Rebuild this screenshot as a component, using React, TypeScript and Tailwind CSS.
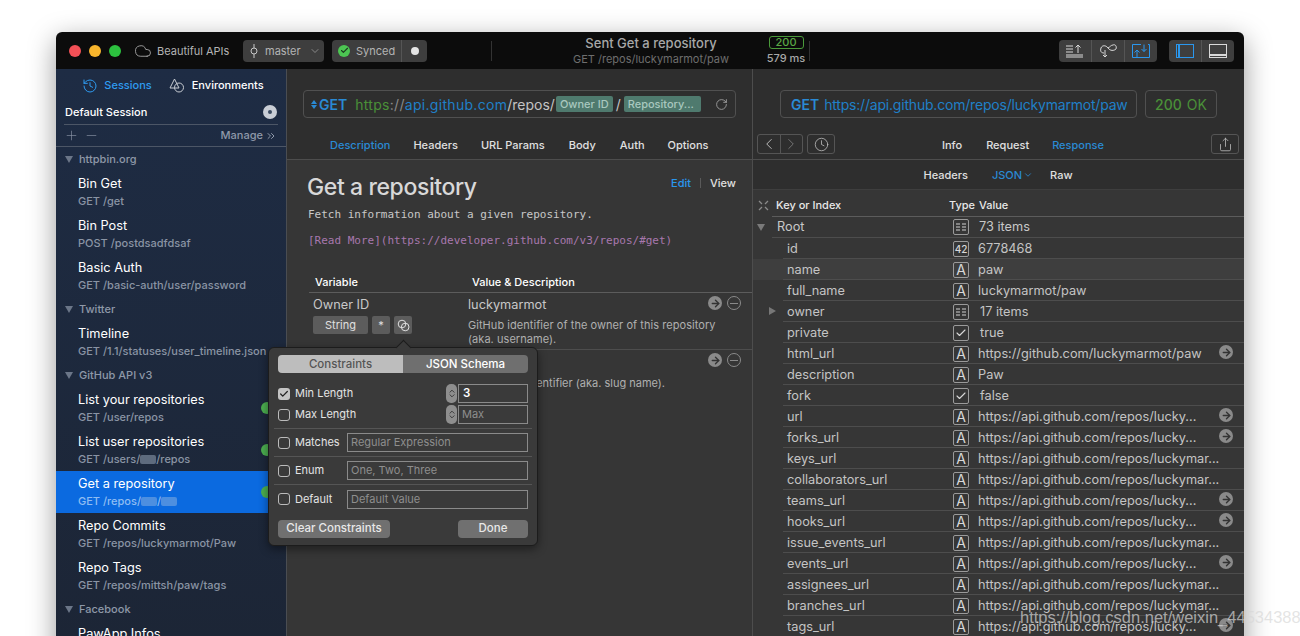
import { ArrowRight, Check, ChevronDown, ChevronLeft, ChevronRight, ChevronsRight, ChevronsUpDown, Clock, Cloud, History, Minus, Plus, RotateCw, Share } from "lucide-react";

const groups = [
  {
    name: "httpbin.org",
    items: [
      { title: "Bin Get", path: "GET /get" },
      { title: "Bin Post", path: "POST /postdsadfdsaf" },
      { title: "Basic Auth", path: "GET /basic-auth/user/password" },
    ],
  },
  { name: "Twitter", items: [{ title: "Timeline", path: "GET /1.1/statuses/user_timeline.json" }] },
  {
    name: "GitHub API v3",
    items: [
      { title: "List your repositories", path: "GET /user/repos", dot: true },
      { title: "List user repositories", path: "GET /users/", tail: "/repos", tokens: 1, dot: true },
      { title: "Get a repository", path: "GET /repos/", tail: "/", tokens: 2, dot: true, active: true },
      { title: "Repo Commits", path: "GET /repos/luckymarmot/Paw" },
      { title: "Repo Tags", path: "GET /repos/mittsh/paw/tags" },
    ],
  },
  { name: "Facebook", items: [{ title: "PawApp Infos", path: "" }] },
];

const shortUrl = "https://api.github.com/repos/lucky...";
const longUrl = "https://api.github.com/repos/luckymar...";

const rows = [
  { k: "id", t: "42", v: "6778468" },
  { k: "name", t: "A", v: "paw", hover: true },
  { k: "full_name", t: "A", v: "luckymarmot/paw" },
  { k: "owner", t: "list", v: "17 items", arrow: true, nudge: true },
  { k: "private", t: "check", v: "true", nudge: true },
  { k: "html_url", t: "A", v: "https://github.com/luckymarmot/paw", go: true },
  { k: "description", t: "A", v: "Paw" },
  { k: "fork", t: "check", v: "false", nudge: true },
  { k: "url", t: "A", v: shortUrl, go: true },
  { k: "forks_url", t: "A", v: shortUrl, go: true },
  { k: "keys_url", t: "A", v: longUrl },
  { k: "collaborators_url", t: "A", v: longUrl },
  { k: "teams_url", t: "A", v: shortUrl, go: true },
  { k: "hooks_url", t: "A", v: shortUrl, go: true },
  { k: "issue_events_url", t: "A", v: longUrl },
  { k: "events_url", t: "A", v: shortUrl, go: true },
  { k: "assignees_url", t: "A", v: longUrl },
  { k: "branches_url", t: "A", v: longUrl },
  { k: "tags_url", t: "A", v: shortUrl, go: true },
];

function GoIcon() {
  return (
    <span className="flex h-[14px] w-[14px] items-center justify-center rounded-full bg-[#8a8a8a]">
      <ArrowRight className="h-[11px] w-[11px] text-[#333]" strokeWidth={3} />
    </span>
  );
}

function RemoveIcon() {
  return (
    <span className="flex h-[14px] w-[14px] items-center justify-center rounded-full border border-[#8a8a8a]">
      <span className="h-px w-2 bg-[#8a8a8a]" />
    </span>
  );
}

function ListGlyph() {
  return (
    <svg width="10" height="8" viewBox="0 0 10 8" stroke="#d0d0d0" strokeWidth="1">
      <path d="M0 1h4M6 1h4M0 4h4M6 4h4M0 7h4M6 7h4" />
    </svg>
  );
}

function TypeIcon({ t }: { t: string }) {
  return (
    <span className="flex h-[16px] w-[16px] shrink-0 items-center justify-center rounded-[2px] border border-[#9a9a9a] text-[#d8d8d8]">
      {t === "list" && <ListGlyph />}
      {t === "check" && <Check className="h-[12px] w-[12px]" strokeWidth={2.25} />}
      {t === "42" && <span className="text-[10px] font-medium leading-none">42</span>}
      {t === "A" && <span className="text-[14px] leading-none">A</span>}
    </span>
  );
}

function Sidebar() {
  return (
    <aside className="flex w-[231px] shrink-0 flex-col border-r border-[#4a4d52] bg-gradient-to-b from-[#1e2c44] to-[#1c2535]">
      <div className="flex h-[32px] items-center justify-center gap-[17px] pl-[4px] pt-[1px] text-[11px] font-medium">
        <span className="flex items-center gap-[6px] text-[#2f9bf0]">
          <History className="h-[16px] w-[16px]" strokeWidth={1.5} />
          Sessions
        </span>
        <span className="flex items-center gap-[8px] text-white">
          <svg width="15" height="15" viewBox="0 0 15 15" fill="none" stroke="#c8ccd2" strokeWidth="1">
            <path d="M5.5 1 L1 10 H10 Z" />
            <circle cx="10" cy="9.5" r="4.5" />
          </svg>
          Environments
        </span>
      </div>
      <div className="mx-[8px] flex h-[24px] items-center justify-between border-b border-[#4c5666] pb-[1px] pl-[1px] pr-[1px] text-[11px] font-medium text-white">
        Default Session
        <span className="flex h-[14px] w-[14px] items-center justify-center rounded-full bg-[#c9ced6]">
          <span className="h-[4px] w-[4px] rounded-full bg-[#3a4a60]" />
        </span>
      </div>
      <div className="flex h-[22px] items-center justify-between border-b border-[#4c5666] pl-[8px] pr-[9px] text-[#8e99aa]">
        <span className="flex items-center gap-[5px]">
          <Plus className="h-[15px] w-[15px]" strokeWidth={1} />
          <Minus className="h-[15px] w-[15px]" strokeWidth={1} />
        </span>
        <span className="flex items-center gap-[2px] text-[11px] font-medium">
          Manage
          <ChevronsRight className="h-[12px] w-[12px]" />
        </span>
      </div>
      {groups.map((g) => (
        <div key={g.name}>
          <div className="flex h-[24px] items-center gap-[6px] pl-[9px] pt-[1px] text-[11px] font-medium text-[#8e98a8]">
            <span className="h-0 w-0 border-x-[4px] border-t-[7px] border-x-transparent border-t-[#6b7688]" />
            {g.name}
          </div>
          {g.items.map((it) => (
            <div
              key={it.title}
              className={`relative flex h-[42px] flex-col justify-center overflow-visible whitespace-nowrap pl-[22px] ${it.active ? "bg-[#0b6ae0]" : ""}`}
            >
              <div className="translate-y-px text-[12.75px] leading-[18px] text-white">{it.title}</div>
              <div className={`flex h-[18px] items-center text-[11px] font-medium leading-[18px] ${it.active ? "text-[#8fbdf2]" : "text-[#8a94a4]"}`}>
                {it.path}
                {it.tokens && <span className={`h-[9px] w-[16px] rounded-[2px] ${it.active ? "bg-[#4d8fe0]" : "bg-[#5e6b7e]"}`} />}
                {it.tail}
                {it.tokens === 2 && <span className={`h-[9px] w-[16px] rounded-[2px] ${it.active ? "bg-[#4d8fe0]" : "bg-[#5e6b7e]"}`} />}
              </div>
              {it.dot && <span className="absolute left-[205px] top-[15px] h-[12px] w-[12px] rounded-full bg-[#4caf50]" />}
            </div>
          ))}
        </div>
      ))}
    </aside>
  );
}

function ConstraintRow({ label, placeholder }: { label: string; placeholder: string }) {
  return (
    <div className="flex h-[28px] items-center border-b border-[#555] px-[4px] last:border-b-0">
      <span className="h-[12px] w-[12px] shrink-0 rounded-[3px] border border-[#bbb]" />
      <span className="ml-[5px] w-[52px] text-[11px] text-[#e4e4e4]">{label}</span>
      <span className="flex h-[19px] w-[181px] items-center border border-[#8a8a8a] pl-[3px] text-[11px] text-[#8e8e8e]">{placeholder}</span>
    </div>
  );
}

function Stepper() {
  return (
    <span className="flex h-[19px] w-[11px] items-center justify-center rounded-[5px] bg-[#8e8e8e]">
      <ChevronsUpDown className="h-[13px] w-[10px] text-[#2c2c2c]" />
    </span>
  );
}

function Popover() {
  return (
    <div className="absolute left-[212px] top-[315px] w-[270px] rounded-[6px] border border-[#1c1c1c] bg-[#3a3a3a] px-[5px] pt-[7px] shadow-[0_3px_10px_rgba(0,0,0,0.45)]">
      <span className="absolute left-[129px] top-[-6px] h-[11px] w-[11px] rotate-45 border-l border-t border-[#1c1c1c] bg-[#3a3a3a]" />
      <div className="relative mx-[4px] flex h-[18px] overflow-hidden rounded-[4px] pt-0 text-[11.5px] font-medium">
        <span className="flex w-[125px] items-center justify-center bg-[#bdbdbd] pt-px text-[#555]">Constraints</span>
        <span className="flex w-[125px] items-center justify-center bg-[#6f6f6f] pt-px text-white">JSON Schema</span>
      </div>
      <div className="mt-[11px] flex h-[19px] items-center pl-[4px] pr-[4px]">
        <span className="flex h-[12px] w-[12px] items-center justify-center rounded-[3px] bg-[#c4c4c4]">
          <Check className="h-[10px] w-[10px] text-[#222]" strokeWidth={3} />
        </span>
        <span className="ml-[5px] w-[151px] text-[11px] text-[#e4e4e4]">Min Length</span>
        <Stepper />
        <span className="ml-px flex h-[19px] w-[70px] items-center border border-[#8a8a8a] pl-[4px] text-[11.5px] font-semibold text-white">3</span>
      </div>
      <div className="mt-[2px] flex h-[19px] items-center pl-[4px] pr-[4px]">
        <span className="h-[12px] w-[12px] rounded-[3px] border border-[#bbb]" />
        <span className="ml-[5px] w-[151px] text-[11px] text-[#e4e4e4]">Max Length</span>
        <Stepper />
        <span className="ml-px flex h-[19px] w-[70px] items-center border border-[#8a8a8a] pl-[3px] text-[11px] text-[#8e8e8e]">Max</span>
      </div>
      <div className="mt-[4px] border-t border-[#555]">
        <ConstraintRow label="Matches" placeholder="Regular Expression" />
        <ConstraintRow label="Enum" placeholder="One, Two, Three" />
        <ConstraintRow label="Default" placeholder="Default Value" />
      </div>
      <div className="mt-[7px] flex justify-between px-[4px] pb-[7px] text-[11.5px] font-medium text-[#e8e8e8]">
        <span className="flex h-[18px] w-[112px] items-center justify-center rounded-[4px] bg-[#707070]">Clear Constraints</span>
        <span className="flex h-[18px] w-[70px] items-center justify-center rounded-[4px] bg-[#707070]">Done</span>
      </div>
    </div>
  );
}

function CenterPane() {
  return (
    <section className="flex w-[466px] shrink-0 flex-col border-r border-[#4d4d4d] bg-[#363636]">
      <div className="h-[91px] border-b border-[#4d4d4d] bg-[#2e2e2e] pt-[21px]">
        <div className="mx-[16px] flex h-[28px] items-center whitespace-nowrap rounded-[4px] border border-[#505050] pl-[7px] pr-[7px] text-[14px]">
          <span className="flex flex-col text-[#2a8ad4]">
            <span className="h-0 w-0 border-x-[3px] border-b-[4px] border-x-transparent border-b-[#2a8ad4]" />
            <span className="mt-px h-0 w-0 border-x-[3px] border-t-[4px] border-x-transparent border-t-[#2a8ad4]" />
          </span>
          <span className="ml-[2px] font-semibold text-[#2a8ad4]">GET</span>
          <span className="ml-[8px] tracking-[0.3px] text-[#4a9038]">https</span>
          <span className="tracking-[0.3px] text-[#8a8a8a]">://</span>
          <span className="tracking-[0.3px] text-[#2080c8]">api.github.com</span>
          <span className="text-[#c4c4c4]">/repos/</span>
          <span className="ml-px rounded-[2px] bg-[#4f7a6e] px-[4px] text-[11px] font-medium leading-[16px] text-[#a9c8bf]">Owner ID</span>
          <span className="mx-[3px] text-[#c4c4c4]">/</span>
          <span className="w-[77px] rounded-[2px] bg-[#4f7a6e] px-[4px] text-[11px] font-medium leading-[16px] text-[#a9c8bf]">Repository...</span>
          <RotateCw className="ml-auto h-[13px] w-[13px] text-[#aaa]" strokeWidth={1.5} />
        </div>
        <div className="mt-[19px] flex pl-[43px] text-[11px] font-medium text-[#e0e0e0]">
          <span className="text-[#2a8ad4]">Description</span>
          <span className="ml-[23px]">Headers</span>
          <span className="ml-[23px]">URL Params</span>
          <span className="ml-[24px]">Body</span>
          <span className="ml-[24px]">Auth</span>
          <span className="ml-[23px]">Options</span>
        </div>
      </div>
      <div className="px-[20px] pt-[12px]">
        <div className="flex items-start justify-between">
          <h1 className="text-[23px] font-medium leading-[30px] tracking-[-0.4px] text-[#d8d8d8]">Get a repository</h1>
          <div className="mr-[-4px] mt-[3px] flex items-center text-[11px] font-medium">
            <span className="text-[#2a97ee]">Edit</span>
            <span className="mx-[9px] h-[10px] w-px bg-[#5a5a5a]" />
            <span className="text-[#e0e0e0]">View</span>
          </div>
        </div>
        <p className="ml-px mt-[6px] font-['DejaVu_Sans_Mono',monospace] text-[11px] leading-[14px] text-[#c8c8c8]">Fetch information about a given repository.</p>
        <p className="ml-px mt-[12px] font-['DejaVu_Sans_Mono',monospace] text-[11px] leading-[14px] text-[#a878ae]">[Read More](https://developer.github.com/v3/repos/#get)</p>
      </div>
      <div className="ml-[22px] mt-[25px]">
        <div className="flex h-[20px] items-center border-b border-[#5c5c5c] pl-[6px] text-[11px] font-medium text-white">
          <span className="w-[157px]">Variable</span>
          <span>Value &amp; Description</span>
        </div>
        <div className="relative flex h-[57px] border-b border-[#4d4d4d] pl-[4px]">
          <div className="w-[155px]">
            <div className="pt-[3px] text-[12.75px] leading-[18px] text-[#c8c8c8]">Owner ID</div>
            <div className="mt-[2px] flex gap-[4px] text-[11px] text-[#e0e0e0]">
              <span className="flex h-[18px] w-[55px] items-center justify-center rounded-[2px] bg-[#5c5c5c]">String</span>
              <span className="flex h-[18px] w-[18px] items-center justify-center rounded-[2px] bg-[#5c5c5c]">*</span>
              <span className="flex h-[18px] w-[18px] items-center justify-center rounded-[2px] bg-[#5c5c5c]">
                <svg width="13" height="13" viewBox="0 0 13 13" fill="none" stroke="#e0e0e0" strokeWidth="1">
                  <circle cx="5" cy="5" r="3.8" />
                  <circle cx="8.2" cy="8" r="3.8" />
                </svg>
              </span>
            </div>
          </div>
          <div className="text-[#c8c8c8]">
            <div className="pt-[3px] text-[12.75px] leading-[18px]">luckymarmot</div>
            <div className="mt-[4px] whitespace-nowrap text-[11px] leading-[14px] tracking-[0.05px] text-[#b0b0b0]">
              GitHub identifier of the owner of this repository
              <br />
              (aka. username).
            </div>
          </div>
          <span className="absolute left-[399px] top-[3px] flex gap-[5px]">
            <GoIcon />
            <RemoveIcon />
          </span>
        </div>
        <div className="relative h-[60px] pl-[159px] pt-[26px] text-[11px] leading-[14px] text-[#b0b0b0]">
          Repository identifier (aka. slug name).
          <span className="absolute left-[399px] top-[3px] flex gap-[5px]">
            <GoIcon />
            <RemoveIcon />
          </span>
        </div>
      </div>
    </section>
  );
}

function RightPane() {
  return (
    <section className="flex min-w-0 flex-1 flex-col bg-[#363636]">
      <div className="bg-[#2e2e2e]">
        <div className="flex h-[91px] flex-col border-b border-[#4d4d4d] pt-[21px]">
          <div className="flex gap-[8px] pl-[27px]">
            <div className="flex h-[28px] w-[357px] items-center gap-[5px] rounded-[4px] border border-[#505050] pl-[10px] text-[14px] tracking-[-0.2px] text-[#2080c8]">
              <span className="font-semibold tracking-normal text-[#2a8ad4]">GET</span>
              https://api.github.com/repos/luckymarmot/paw
            </div>
            <div className="flex h-[28px] w-[72px] items-center justify-center gap-[5px] rounded-[4px] border border-[#505050] text-[14px] text-[#4a9038]">
              <span className="font-medium">200</span> OK
            </div>
          </div>
          <div className="relative mt-[16px] flex h-[20px] items-center pl-[4px] text-[11px] font-medium text-[#e0e0e0]">
            <span className="flex h-[20px] w-[46px] rounded-[3px] border border-[#555]">
              <span className="flex w-[23px] items-center justify-center border-r border-[#555]">
                <ChevronLeft className="h-[18px] w-[18px] text-[#c0c0c0]" strokeWidth={1.25} />
              </span>
              <span className="flex w-[22px] items-center justify-center">
                <ChevronRight className="h-[18px] w-[18px] text-[#777]" strokeWidth={1.25} />
              </span>
            </span>
            <span className="ml-[4px] flex h-[20px] w-[28px] items-center justify-center rounded-[3px] border border-[#555]">
              <Clock className="h-[15px] w-[15px] text-[#c0c0c0]" strokeWidth={1.25} />
            </span>
            <span className="ml-[107px] mt-[2px]">Info</span>
            <span className="ml-[24px] mt-[2px]">Request</span>
            <span className="ml-[23px] mt-[2px] text-[#2a8ad4]">Response</span>
            <span className="ml-auto mr-[5px] flex h-[20px] w-[28px] items-center justify-center rounded-[3px] border border-[#555]">
              <Share className="h-[15px] w-[15px] text-[#c0c0c0]" strokeWidth={1.25} />
            </span>
          </div>
        </div>
        <div className="flex h-[30px] items-center justify-center border-b border-[#3e3e3e] pr-[1px] pt-[1px] text-[11px] font-medium text-[#e0e0e0]">
          <span>Headers</span>
          <span className="ml-[24px] flex items-center gap-px text-[#2a8ad4]">
            JSON
            <ChevronDown className="h-[10px] w-[10px]" />
          </span>
          <span className="ml-[17px]">Raw</span>
        </div>
      </div>
      <div className="relative flex h-[26px] items-center pl-[23px] pt-[5px] text-[11px] font-medium text-[#e8e8e8]">
        <svg className="absolute left-[5px] top-[10px]" width="11" height="11" viewBox="0 0 11 11" fill="none" stroke="#8a8a8a" strokeWidth="1.25">
          <path d="M1 1l3 3M10 1L7 4M1 10l3-3M10 10L7 7" />
        </svg>
        <span className="w-[173px]">Key or Index</span>
        <span className="w-[30px]">Type</span>
        <span>Value</span>
      </div>
      <div className="relative ml-[19px] flex h-[22px] items-center border-y border-[#4d4d4d] border-t-[#5c5c5c] text-[12.75px] text-[#c8c8c8]">
        <span className="absolute left-[-15px] top-[7px] h-0 w-0 border-x-[4.5px] border-t-[7px] border-x-transparent border-t-[#7a7a7a]" />
        <span className="ml-[5px] w-[176px]">Root</span>
        <TypeIcon t="list" />
        <span className="ml-[10px]">73 items</span>
      </div>
      {rows.map((r) => (
        <div key={r.k} className={`relative flex h-[21px] items-center whitespace-nowrap pl-[34px] text-[12.75px] text-[#c4c4c4] ${r.hover ? "bg-[#3e3e3e]" : ""}`}>
          <span className="absolute bottom-0 left-[30px] right-0 h-px bg-[#4d4d4d]" />
          {r.arrow && <span className="absolute left-[16px] top-[6px] h-0 w-0 border-y-[4px] border-l-[7px] border-y-transparent border-l-[#777]" />}
          <span className="w-[166px]">{r.k}</span>
          <TypeIcon t={r.t} />
          <span className={r.nudge ? "ml-[11px]" : "ml-[9px]"}>{r.v}</span>
          {r.go && (
            <span className="absolute left-[466px] top-[2px]">
              <GoIcon />
            </span>
          )}
        </div>
      ))}
    </section>
  );
}

export default function App() {
  return (
    <div className="relative h-[636px] w-[1300px] overflow-hidden bg-white pl-[56px] pr-[56px] pt-[32px] font-['Inter',sans-serif]">
      <div className="relative flex h-[640px] flex-col overflow-hidden rounded-t-[6px] shadow-[0_8px_28px_rgba(0,0,0,0.4)]">
        <header className="flex h-[37px] shrink-0 items-center bg-[#0c0c0c] pl-[13px] text-[11px] text-[#b4b4b4]">
          <span className="h-[12px] w-[12px] rounded-full bg-[#f25056]" />
          <span className="ml-[8px] h-[12px] w-[12px] rounded-full bg-[#f8b52c]" />
          <span className="ml-[8px] h-[12px] w-[12px] rounded-full bg-[#2cc13f]" />
          <Cloud className="ml-[13px] h-[18px] w-[18px] text-[#b4b4b4]" strokeWidth={1.1} />
          <span className="ml-[5px] mt-px w-[86px]">Beautiful APIs</span>
          <span className="flex h-[22px] w-[81px] items-center rounded-[4px] bg-[#3e3e3e] pl-[7px]">
            <svg width="8" height="16" viewBox="0 0 8 16" fill="none" stroke="#c8c8c8" strokeWidth="1">
              <circle cx="4" cy="8" r="3" />
              <path d="M4 1v4M4 11v4" />
            </svg>
            <span className="ml-[7px] mt-px">master</span>
            <ChevronDown className="ml-[8px] h-[12px] w-[12px]" strokeWidth={1.25} />
          </span>
          <span className="ml-[8px] flex h-[22px] w-[95px] items-center rounded-[4px] bg-[#3e3e3e] pl-[6px]">
            <span className="flex h-[12px] w-[12px] items-center justify-center rounded-full bg-[#4cc552]">
              <Check className="h-[9px] w-[9px] text-[#1d3b20]" strokeWidth={3} />
            </span>
            <span className="ml-[6px] mt-px w-[45px]">Synced</span>
            <span className="h-[22px] w-px bg-[#555]" />
            <span className="ml-[9px] h-[8px] w-[8px] rounded-full bg-[#e4e4e4]" />
          </span>
          <span className="ml-[64px] h-[20px] w-px bg-[#333]" />
          <div className="w-[276px] whitespace-nowrap pl-[42px] text-center">
            <div className="text-[13px] font-medium leading-[15px] text-[#a8a8a8]">Sent Get a repository</div>
            <div className="mt-px text-[11px] leading-[14px] text-[#6e6e6e]">GET /repos/luckymarmot/paw</div>
          </div>
          <div className="flex w-[36px] flex-col items-center">
            <span className="flex h-[13px] w-[35px] items-center justify-center rounded-[3px] border border-[#4a9a3a] text-[11px] font-medium text-[#5aa845]">200</span>
            <span className="mt-[2px] whitespace-nowrap text-[11px] font-medium leading-[14px] text-[#a8a8a8]">579 ms</span>
          </div>
          <span className="ml-[5px] h-[20px] w-px bg-[#333]" />
          <span className="ml-[249px] flex h-[22px] w-[98px] rounded-[4px] bg-[#3e3e3e]">
            <span className="flex w-[33px] items-center justify-center border-r border-[#555]">
              <svg width="18" height="14" viewBox="0 0 18 14" fill="none" stroke="#d8d8d8" strokeWidth="1">
                <path d="M0 2h7M0 5h7M0 8h7M0 11h17M0 13h17M12 9V1M9.500 3.500 12 1l2.500 2.500" />
              </svg>
            </span>
            <span className="flex w-[33px] items-center justify-center border-r border-[#555]">
              <svg width="17" height="14" viewBox="0 0 17 14" fill="none" stroke="#d8d8d8" strokeWidth="1">
                <path d="M4 9C1 9 0 7 1 4c1-3 5-3 7 0s6 3 8 1c1-3-1-5-3-4-2 0-3 2-5 3M5 6v7M3 11l2 2 2-2" />
              </svg>
            </span>
            <span className="flex w-[32px] items-center justify-center">
              <svg width="18" height="14" viewBox="0 0 18 14" fill="none" stroke="#2a97ee" strokeWidth="1">
                <path d="M9 .5H.5v13H17.500V.5H16M12 .5v7M9.500 5 12 7.500 14.500 5M5 13V6M2.500 8.500 5 6l2.500 2.500" />
              </svg>
            </span>
          </span>
          <span className="ml-[12px] flex h-[22px] w-[65px] rounded-[4px] bg-[#3e3e3e]">
            <span className="flex w-[33px] items-center justify-center border-r border-[#555]">
              <span className="flex h-[14px] w-[18px] border border-[#2a97ee]">
                <span className="ml-px h-full w-[2px] bg-[#2a97ee]" />
              </span>
            </span>
            <span className="flex w-[32px] items-center justify-center">
              <span className="flex h-[14px] w-[18px] items-end border border-[#d8d8d8] pb-px">
                <span className="h-[2px] w-full bg-[#d8d8d8]" />
              </span>
            </span>
          </span>
        </header>
        <div className="flex min-h-0 flex-1">
          <Sidebar />
          <CenterPane />
          <RightPane />
        </div>
        <Popover />
      </div>
      <span className="absolute left-[1020px] top-[607px] whitespace-nowrap font-['Liberation_Sans',sans-serif] text-[16.5px] leading-[20px] text-[#d8d8d8]/70">
        https://blog.csdn.net/weixin_44534388
      </span>
    </div>
  );
}
